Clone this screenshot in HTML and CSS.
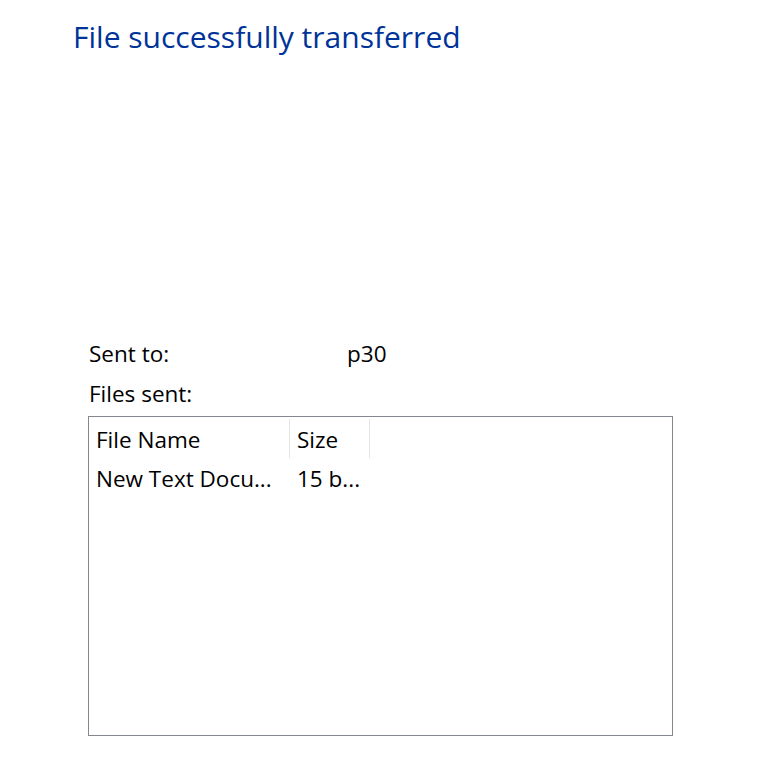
FILE: index.html
```html
<!DOCTYPE html>
<html>
<head>
<meta charset="utf-8">
<link rel="stylesheet" href="styles.css">
</head>
<body>
<div class="page">
  <h1 class="title">File successfully transferred</h1>
  <div class="details">
    <div class="row"><span class="label">Sent to:</span><span class="value">p30</span></div>
    <div class="row"><span class="label">Files sent:</span></div>
    <div class="list">
      <div class="header">
        <div class="col name">File Name</div>
        <div class="col size">Size</div>
      </div>
      <div class="item">
        <div class="col name">New Text Docu...</div>
        <div class="col size">15 b...</div>
      </div>
    </div>
  </div>
</div>
</body>
</html>
```
FILE: styles.css
```css
html, body {
  margin: 0;
  padding: 0;
  background: #ffffff;
}
.page {
  width: 782px;
  height: 775px;
  font-family: "Open Sans", "Noto Sans", sans-serif;
  color: #000;
}
.title {
  margin: 0;
  padding: 17px 0 0 73px;
  font-size: 30px;
  font-weight: 400;
  line-height: 40px;
  color: #003399;
}
.details {
  padding: 277px 0 0 88px;
}
.row {
  display: flex;
  height: 40px;
  align-items: center;
  font-size: 22.5px;
  line-height: 28px;
}
.label {
  width: 258px;
  padding-left: 1px;
}
.list {
  margin-top: 2px;
  width: 583px;
  height: 318px;
  border: 1px solid #828790;
}
.header, .item {
  display: flex;
  font-size: 22.5px;
  line-height: 28px;
}
.header {
  height: 39px;
  align-items: flex-start;
  padding-top: 2px;
}
.item {
  height: 38px;
  padding-top: 2px;
  align-items: center;
}
.col {
  padding-left: 7px;
  box-sizing: border-box;
  white-space: nowrap;
}
.name {
  width: 201px;
}
.size {
  width: 80px;
}
.header .col {
  border-right: 1px solid #e5e5e5;
  height: 39px;
  line-height: 41px;
}
```
